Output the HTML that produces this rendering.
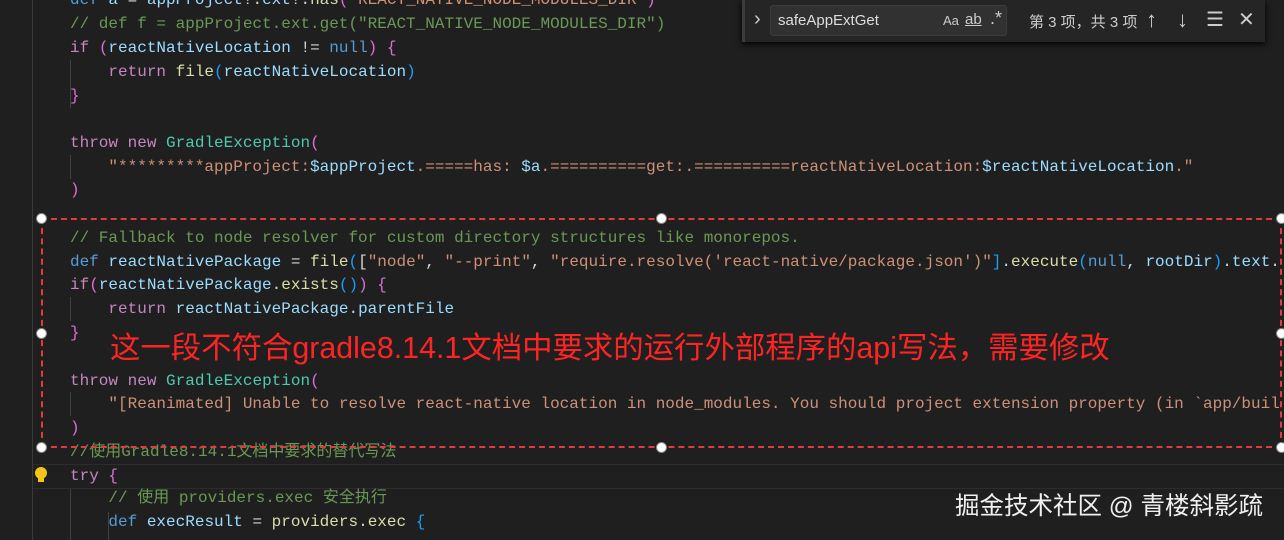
<!DOCTYPE html>
<html><head><meta charset="utf-8"><style>
body{margin:0;width:1284px;height:540px;overflow:hidden;background:#1f1f1f;position:relative;font-family:"Liberation Mono","Noto Sans CJK SC",monospace;font-size:16px;}
.l{position:absolute;left:70px;white-space:pre;line-height:24px;height:24px;color:#d4d4d4;}
.k{color:#c586c0}.d{color:#569cd6}.v{color:#9cdcfe}.f{color:#dcdcaa}.c{color:#6a9955}.s{color:#ce9178}.t{color:#4ec9b0}.p{color:#da70d6}.b{color:#179fff}.y{color:#ffd700}
.g{position:absolute;width:1px;background:#404040}
.h{position:absolute;width:9px;height:9px;border-radius:50%;background:#fff;border:1px solid #888;margin:-5px 0 0 -5px}
</style></head><body>
<div style="position:absolute;left:32px;top:0;width:1px;height:540px;background:#3a3a3a"></div>
<div class="g" style="left:70px;top:60px;height:48px"></div>
<div class="g" style="left:70px;top:155px;height:24px"></div>
<div class="g" style="left:70px;top:297px;height:24px"></div>
<div class="g" style="left:70px;top:392px;height:24px"></div>
<div class="g" style="left:70px;top:488px;height:52px"></div>
<div class="g" style="left:108px;top:512px;height:28px"></div>
<div style="position:absolute;left:33px;top:464px;width:1251px;height:23px;border-top:1px solid #2c2c2c;border-bottom:1px solid #2c2c2c"></div>
<div class="l" style="top:-12px"><span class="d">def</span> <span class="v">a</span> = <span class="v">appProject</span>!.<span class="v">ext</span>!.<span class="f">has</span><span class="p">(</span><span class="s">"REACT_NATIVE_NODE_MODULES_DIR"</span><span class="p">)</span></div>
<div class="l c" style="top:12px">// def f = appProject.ext.get("REACT_NATIVE_NODE_MODULES_DIR")</div>
<div class="l" style="top:36px"><span class="k">if</span> <span class="p">(</span><span class="v">reactNativeLocation</span> != <span class="d">null</span><span class="p">)</span> <span class="p">{</span></div>
<div class="l" style="top:60px">    <span class="k">return</span> <span class="f">file</span><span class="b">(</span><span class="v">reactNativeLocation</span><span class="b">)</span></div>
<div class="l" style="top:84px"><span class="p">}</span></div>
<div class="l" style="top:131px"><span class="k">throw</span> <span class="k">new</span> <span class="t">GradleException</span><span class="p">(</span></div>
<div class="l" style="top:155px">    <span class="s">"*********appProject:</span><span class="v">$appProject</span><span class="s">.=====has: </span><span class="v">$a</span><span class="s">.==========get:.==========reactNativeLocation:</span><span class="v">$reactNativeLocation</span><span class="s">."</span></div>
<div class="l" style="top:178px"><span class="p">)</span></div>
<div class="l c" style="top:226px">// Fallback to node resolver for custom directory structures like monorepos.</div>
<div class="l" style="top:250px"><span class="d">def</span> <span class="v">reactNativePackage</span> = <span class="f">file</span><span class="b">(</span>[<span class="s">"node"</span>, <span class="s">"--print"</span>, <span class="s">"require.resolve('react-native/package.json')"</span><span class="b">]</span>.<span class="f">execute</span><span class="b">(</span><span class="d">null</span>, <span class="v">rootDir</span><span class="b">)</span>.<span class="v">text</span>.</div>
<div class="l" style="top:273px"><span class="k">if</span><span class="p">(</span><span class="v">reactNativePackage</span>.<span class="f">exists</span><span class="b">()</span><span class="p">)</span> <span class="p">{</span></div>
<div class="l" style="top:297px">    <span class="k">return</span> <span class="v">reactNativePackage</span>.<span class="v">parentFile</span></div>
<div class="l" style="top:321px"><span class="p">}</span></div>
<div class="l" style="top:369px"><span class="k">throw</span> <span class="k">new</span> <span class="t">GradleException</span><span class="p">(</span></div>
<div class="l" style="top:392px">    <span class="s">"[Reanimated] Unable to resolve react-native location in node_modules. You should project extension property (in `app/buil</span></div>
<div class="l" style="top:416px"><span class="p">)</span></div>
<div class="l c" style="top:440px">//使用Gradle8.14.1文档中要求的替代写法</div>
<div class="l" style="top:464px"><span class="k">try</span> <span class="p">{</span></div>
<div class="l c" style="top:486px">    // 使用 providers.exec 安全执行</div>
<div class="l" style="top:510px">    <span class="d">def</span> <span class="v">execResult</span> = <span class="f">providers</span>.<span class="f">exec</span> <span class="b">{</span></div>
<div style="position:absolute;left:35px;top:467px;width:12px;height:12px;border-radius:50%;background:#f5c518"></div>
<div style="position:absolute;left:38px;top:477px;width:6px;height:5px;background:#f5c518"></div>
<div style="position:absolute;left:41px;top:218px;width:1241px;height:230px;border:2px dashed #e03c3c;box-sizing:border-box"></div>
<div class="h" style="left:41px;top:218px"></div><div class="h" style="left:661px;top:218px"></div><div class="h" style="left:1281px;top:218px"></div>
<div class="h" style="left:41px;top:333px"></div><div class="h" style="left:1281px;top:333px"></div>
<div class="h" style="left:41px;top:447px"></div><div class="h" style="left:661px;top:447px"></div><div class="h" style="left:1281px;top:447px"></div>
<div style="position:absolute;left:110px;top:328px;color:#ff2424;font-family:'Liberation Sans','Noto Sans CJK SC',sans-serif;font-size:30.4px;line-height:40px;white-space:nowrap">这一段不符合gradle8.14.1文档中要求的运行外部程序的api写法，需要修改</div>
<div style="position:absolute;left:955px;top:491px;color:#f0f0f0;font-family:'Liberation Sans','Noto Sans CJK SC',sans-serif;font-size:24.5px;line-height:32px;white-space:nowrap">掘金技术社区 @ 青楼斜影疏</div>
<div style="position:absolute;left:742px;top:0;width:520px;height:42px;background:#252526;border-left:3px solid #3c3c3c;box-shadow:0 2px 6px #000;font-family:'Liberation Sans','Noto Sans CJK SC',sans-serif;color:#ccc">
<div style="position:absolute;left:9px;top:8px;font-size:20px">&#x203A;</div>
<div style="position:absolute;left:25px;top:5px;width:237px;height:31px;background:#313131;border:1px solid #3c3c3c;border-radius:3px;box-sizing:border-box"><span style="position:absolute;left:7px;top:6px;font-size:15px;color:#ddd">safeAppExtGet</span><span style="position:absolute;left:172px;top:7px;font-size:13px">Aa</span><span style="position:absolute;left:194px;top:5px;font-size:15px;text-decoration:underline">ab</span><span style="position:absolute;left:219px;top:2px;font-size:18px">.*</span></div>
<div style="position:absolute;left:284px;top:11px;font-size:15px;white-space:nowrap">第 3 项，共 3 项</div>
<div style="position:absolute;left:401px;top:7px;font-size:22px">↑</div>
<div style="position:absolute;left:432px;top:7px;font-size:22px">↓</div>
<div style="position:absolute;left:461px;top:7px;font-size:20px">☰</div>
<div style="position:absolute;left:493px;top:7px;font-size:20px">✕</div>
</div>
</body></html>
